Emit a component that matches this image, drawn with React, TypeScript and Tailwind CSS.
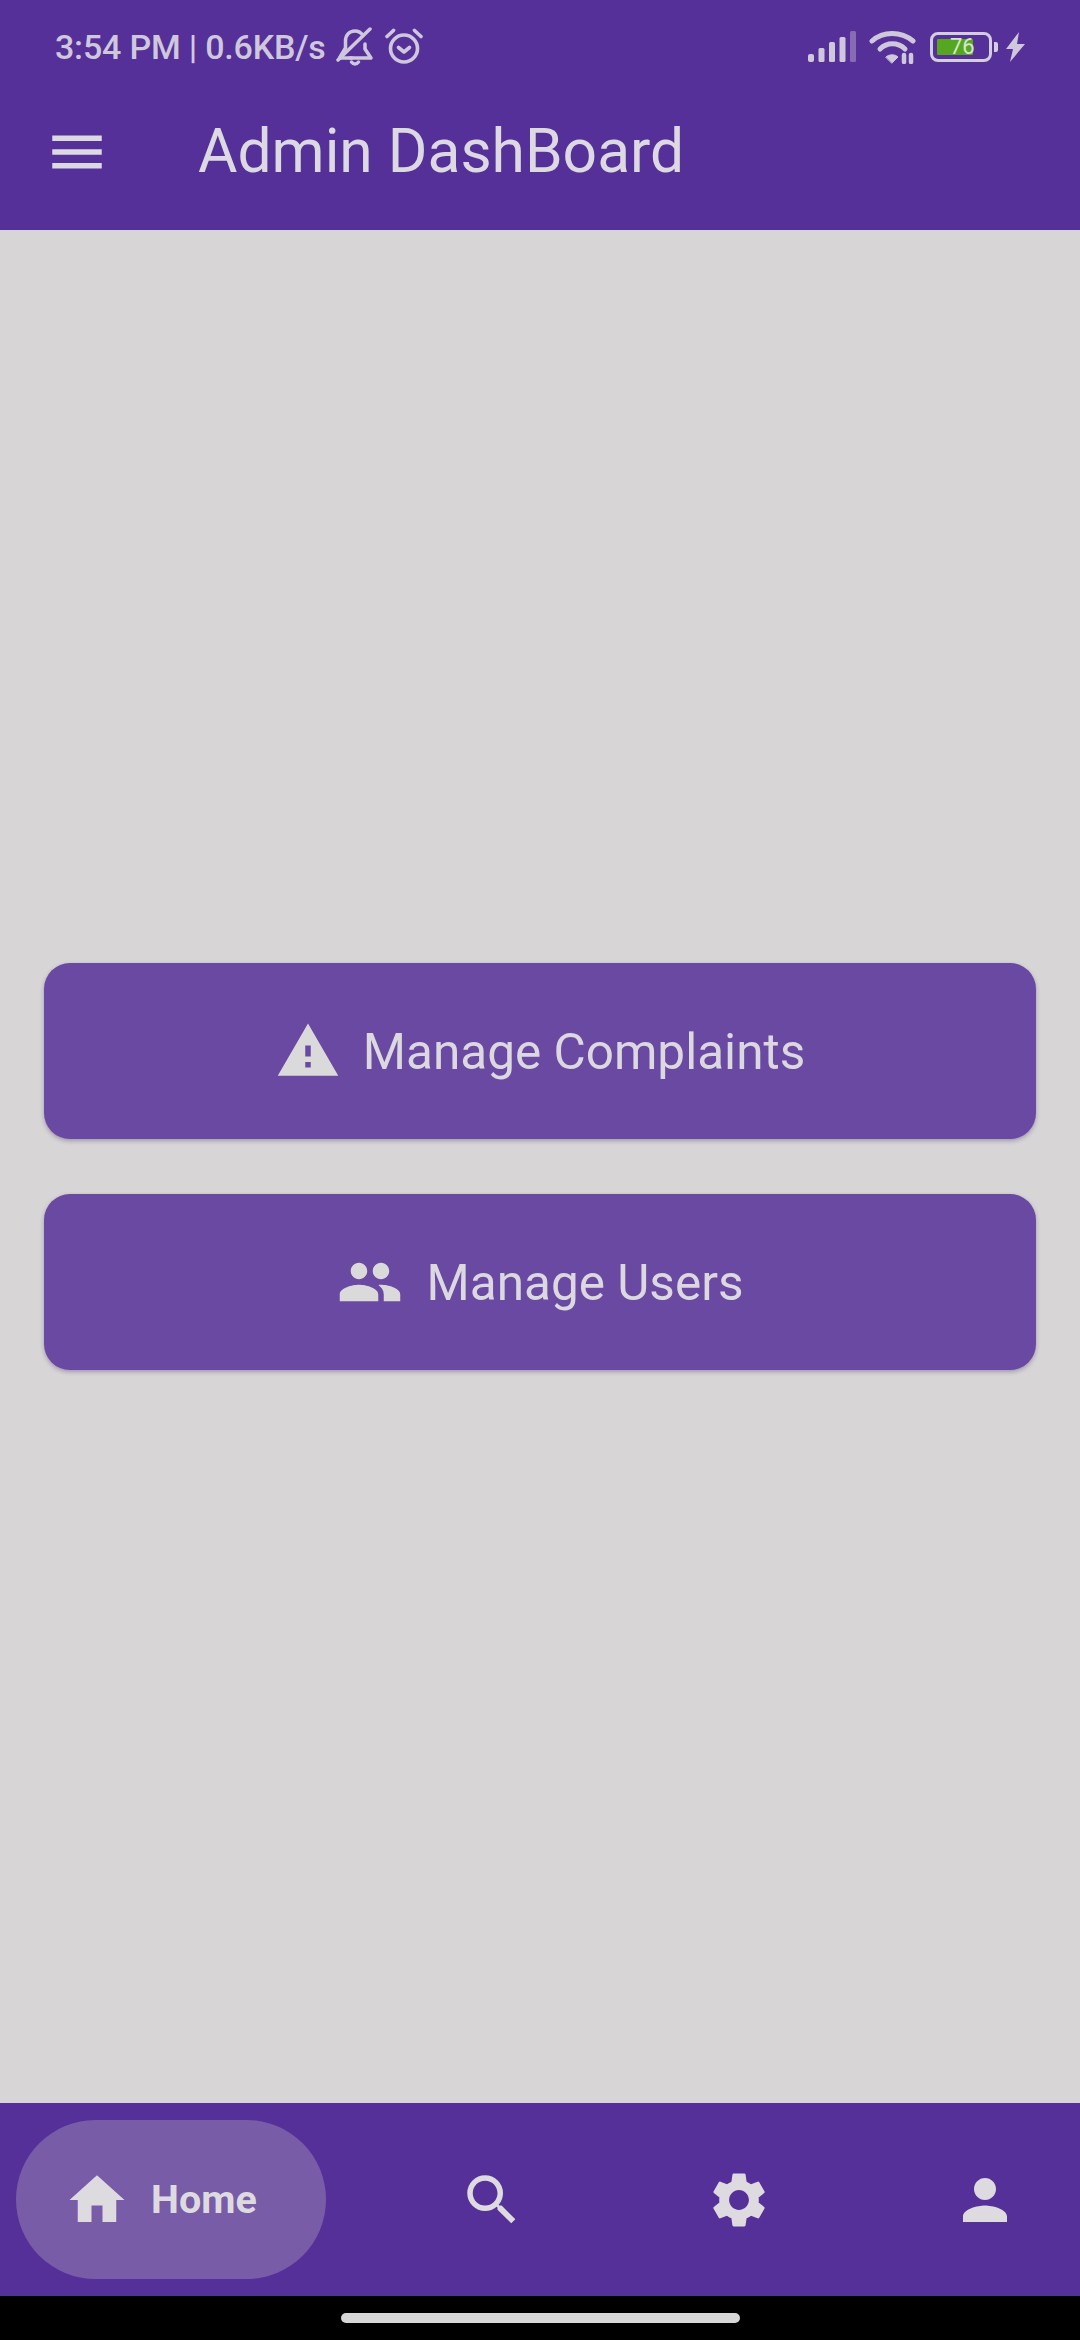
import React from "react";
import { MdMenu, MdWarning, MdPeople, MdHome, MdSearch, MdSettings, MdPerson } from "react-icons/md";

function BellOff() {
  return (
    <svg width="38" height="40" viewBox="0 0 38 40" fill="none" stroke="currentColor" strokeWidth="3.500" strokeLinecap="round" strokeLinejoin="round">
      <path d="M27 8.500C25 5.500 22 4 19 4 13 4 9.500 8.500 9.500 14v7L3.500 31H16" />
      <path d="M29 17v5l6 9H14" />
      <path d="M34 2 2 33" />
      <path d="M15.500 35c2 2.500 5 2.500 7 0" />
    </svg>
  );
}

function Alarm() {
  return (
    <svg width="40" height="40" viewBox="0 0 40 40" fill="none" stroke="currentColor" strokeWidth="3.600" strokeLinecap="round" strokeLinejoin="round">
      <circle cx="20" cy="21.500" r="13.500" />
      <path d="M14.500 20.500l5.500 4.500 5.500-4.500" />
      <path d="M3 9.500 9.500 3.500" />
      <path d="M37 9.500 30.500 3.500" />
    </svg>
  );
}

function Signal() {
  return (
    <svg width="48" height="32" viewBox="0 0 48 32" fill="currentColor">
      <rect x="0" y="23" width="6" height="8" rx="2" />
      <rect x="10.500" y="17" width="6" height="14" rx="1.500" />
      <rect x="21" y="11" width="6" height="20" rx="1.500" />
      <rect x="31.500" y="6" width="6" height="25" rx="1.500" />
      <rect x="42" y="0" width="6" height="31" rx="1.500" opacity="0.4" />
    </svg>
  );
}

function Wifi() {
  return (
    <svg width="48" height="34" viewBox="0 0 48 34" fill="none" stroke="currentColor" strokeLinecap="round">
      <path d="M3 11C14 1 32 1 44 11" strokeWidth="5" />
      <path d="M11 19C18 12 29 12 36 19" strokeWidth="5" />
      <path d="M17 27C20 24 26 24 29 27L23 33z" fill="currentColor" strokeWidth="1" />
      <path d="M35 25v7M42 25v7" strokeWidth="4.500" />
    </svg>
  );
}

function Bolt() {
  return (
    <svg width="19" height="30" viewBox="0 0 19 30" fill="currentColor">
      <path d="M13 0 0 17h7L4 30 19 12h-8z" />
    </svg>
  );
}

function Battery() {
  return (
    <div className="flex items-center">
      <div className="relative flex h-[30px] w-[62px] items-center rounded-[8px] border-[3px] border-[#d3cdde] p-[4px]">
        <div className="h-full w-[36px] rounded-[1px] bg-[#56a61f]" />
        <span className="absolute left-[17px] top-[-3px] text-[22px] leading-[30px] text-[#d6e6cc]">76</span>
      </div>
      <div className="ml-[2px] h-[10px] w-[4px] rounded-r-[2px] bg-[#d3cdde]" />
    </div>
  );
}

function ActionButton({ icon, label, gap }: { icon: React.ReactNode; label: string; gap: string }) {
  return (
    <button className={`flex h-[176px] w-full items-center justify-center ${gap} rounded-[26px] bg-[#6a49a2] text-[49.500px] text-[#dbd8e0] shadow-[0_2px_4px_rgba(60,40,100,0.35)]`}>
      {icon}
      <span className="mt-[2px]">{label}</span>
    </button>
  );
}

export default function App() {
  return (
    <div className="flex h-[2340px] w-[1080px] flex-col overflow-hidden bg-[#d7d5d6] font-['Roboto',sans-serif]">
      <header className="h-[230px] shrink-0 bg-[#553098] text-[#d7d3df]">
        <div className="flex h-[94px] items-center pl-[55px] pr-[55px] text-[#cfc8dc]">
          <span className="text-[34px] font-medium tracking-[-0.2px]">3:54 PM | 0.6KB/s</span>
          <span className="ml-[10px]"><BellOff /></span>
          <span className="ml-[10px]"><Alarm /></span>
          <div className="ml-auto flex items-center">
            <Signal />
            <span className="ml-[13px]"><Wifi /></span>
            <span className="ml-[13px]"><Battery /></span>
            <span className="ml-[8px]"><Bolt /></span>
          </div>
        </div>
        <div className="flex h-[116px] items-center pl-[44px]">
          <MdMenu size={66} className="text-[#dcd9e2]" />
          <h1 className="ml-[88px] text-[60.500px] font-normal text-[#dcd9e2]">Admin DashBoard</h1>
        </div>
      </header>

      <main className="flex flex-1 flex-col items-stretch justify-center gap-[55px] px-[44px]">
        <ActionButton icon={<MdWarning size={66} className="text-[#dbdadb]" />} label="Manage Complaints" gap="gap-[22px]" />
        <ActionButton icon={<MdPeople size={66} className="text-[#dbdadb]" />} label="Manage Users" gap="gap-[24px]" />
      </main>

      <nav className="flex h-[193px] shrink-0 items-center bg-[#553098] pl-[16px] text-[#dddbdf]">
        <div className="flex h-[159px] w-[310px] items-center rounded-full bg-[#785ca8] pl-[48px]">
          <MdHome size={66} />
          <span className="ml-[21px] text-[39.500px] font-bold">Home</span>
        </div>
        <MdSearch size={66} className="ml-[133px]" />
        <MdSettings size={66} className="ml-[181px]" />
        <MdPerson size={66} className="ml-[180px]" />
      </nav>

      <div className="flex h-[44px] shrink-0 items-center justify-center bg-black">
        <div className="h-[10px] w-[399px] rounded-full bg-[#d7d6d7]" />
      </div>
    </div>
  );
}
